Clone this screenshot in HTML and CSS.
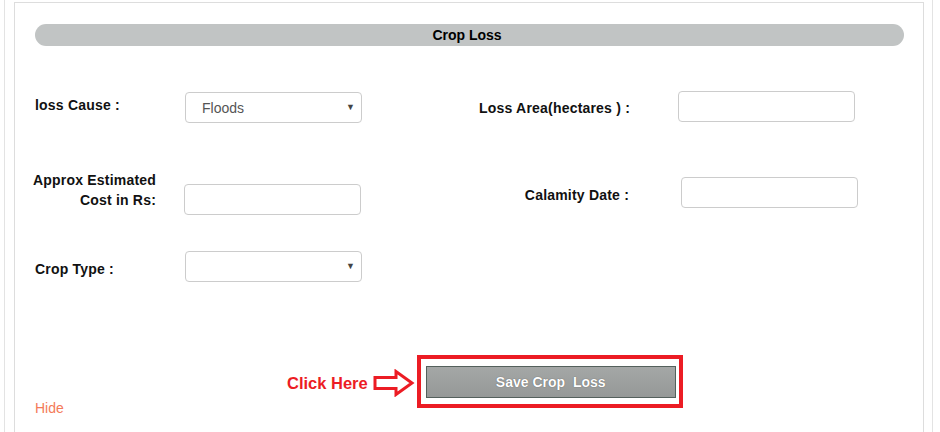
FILE: index.html
```html
<!DOCTYPE html>
<html lang="en">
<head>
    <meta charset="UTF-8">
    <meta name="viewport" content="width=device-width, initial-scale=1.0">
    <title>Crop Loss</title>
    <link rel="stylesheet" href="styles.css">
</head>
<body>
    <div class="page">
        <div class="panel">
            <div class="section-bar">Crop Loss</div>

            <div class="form-row row-one">
                <label class="field-label left-label" for="loss-cause">loss Cause :</label>
                <div class="select-wrap">
                    <select id="loss-cause" class="field">
                        <option selected>Floods</option>
                        <option>Drought</option>
                        <option>Hailstorm</option>
                    </select>
                </div>
                <label class="field-label right-label" for="loss-area">Loss Area(hectares ) :</label>
                <input type="text" id="loss-area" class="field">
            </div>

            <div class="form-row row-two">
                <label class="field-label cost-label" for="cost">Approx Estimated<br>Cost in Rs:</label>
                <input type="text" id="cost" class="field">
                <label class="field-label right-label" for="calamity-date">Calamity Date :</label>
                <input type="text" id="calamity-date" class="field shifted">
            </div>

            <div class="form-row row-three">
                <label class="field-label left-label" for="crop-type">Crop Type :</label>
                <div class="select-wrap">
                    <select id="crop-type" class="field">
                        <option selected></option>
                        <option>Paddy</option>
                        <option>Wheat</option>
                    </select>
                </div>
            </div>

            <div class="action-row">
                <a href="#" class="hide-link">Hide</a>
                <span class="click-here">Click Here</span>
                <svg class="arrow" width="42" height="28" viewBox="0 0 42 28">
                    <polygon points="2,8.5 23,8.5 23,2.5 39,14 23,25.5 23,19.5 2,19.5"
                             fill="none" stroke="#ec1c24" stroke-width="3" stroke-linejoin="miter"/>
                </svg>
                <div class="highlight-box">
                    <button class="save-button">Save Crop&nbsp; Loss</button>
                </div>
            </div>
        </div>
    </div>
</body>
</html>
```

FILE: styles.css
```css
:root {
    --panel-border: #dddddd;
    --bar-color: #c1c4c4;
    --field-border: #cccccc;
    --label-color: #111111;
    --red: #ec1c24;
    --hide-color: #f47b58;
}

* {
    margin: 0;
    padding: 0;
    box-sizing: border-box;
}

body {
    background-color: #ffffff;
    font-family: 'Liberation Sans', Arial, sans-serif;
    overflow: hidden;
}

.page {
    width: 929px;
    margin-left: 4px;
    min-height: 432px;
    border-left: 1px solid #e3e3e3;
    border-right: 1px solid #e3e3e3;
    padding: 2px 8px 0 9px;
}

.panel {
    width: 910px;
    min-height: 440px;
    border: 1px solid var(--panel-border);
    padding: 21px 19px 0 20px;
}

.section-bar {
    height: 22px;
    background-color: var(--bar-color);
    border-radius: 11px;
    text-align: center;
    font-size: 14px;
    font-weight: 700;
    line-height: 22px;
    color: #000;
    padding-right: 5px;
}

.form-row {
    display: flex;
    align-items: flex-start;
}

.row-one {
    margin-top: 45px;
    height: 32px;
}

.row-two {
    margin-top: 47px;
    height: 46px;
}

.row-three {
    margin-top: 35px;
    height: 32px;
}

.field-label {
    font-size: 14px;
    font-weight: 700;
    color: var(--label-color);
    line-height: 16px;
    letter-spacing: 0.2px;
}

.left-label {
    width: 150px;
}

.row-one .left-label {
    margin-top: 6px;
}

.row-three .left-label {
    margin-top: 10px;
}

.cost-label {
    width: 130px;
    margin-right: 28px;
    margin-left: -9px;
    text-align: right;
    line-height: 20px;
}

.right-label {
    width: 268px;
    text-align: right;
    margin-right: 48px;
}

.row-one .right-label {
    margin-top: 9px;
}

.row-two .right-label {
    margin-top: 17px;
    margin-right: 52px;
}

.field {
    width: 177px;
    height: 31px;
    border: 1px solid var(--field-border);
    border-radius: 4px;
    background-color: #fff;
    font-family: 'Liberation Sans', Arial, sans-serif;
    font-size: 14px;
    color: #555;
    padding: 0 16px;
    outline: none;
}

.row-two .field {
    margin-top: 14px;
}

.row-two .shifted {
    margin-top: 7px;
}

.select-wrap {
    position: relative;
    width: 177px;
}

.row-one .select-wrap {
    margin-top: 1px;
}

.select-wrap select {
    appearance: none;
    -webkit-appearance: none;
}

.select-wrap::after {
    content: "\25BC";
    position: absolute;
    right: 7px;
    top: 10px;
    font-size: 9px;
    color: #444;
    pointer-events: none;
}

.action-row {
    display: flex;
    align-items: flex-start;
    margin-top: 72px;
}

.hide-link {
    width: 252px;
    margin-top: 45px;
    font-size: 14px;
    line-height: 16px;
    color: var(--hide-color);
    text-decoration: none;
}

.click-here {
    margin-top: 18px;
    font-size: 16.5px;
    font-weight: 700;
    line-height: 20px;
    color: var(--red);
}

.arrow {
    margin-top: 14px;
    margin-left: 5px;
    margin-right: 2px;
}

.highlight-box {
    border: 4px solid var(--red);
    padding: 7px 3px 6px 5px;
}

.save-button {
    display: block;
    width: 250px;
    height: 32px;
    border: 1px solid #54605c;
    background: linear-gradient(#a4a7a6, #959897);
    color: #fff;
    font-family: 'Liberation Sans', Arial, sans-serif;
    font-size: 14px;
    font-weight: 700;
    text-shadow: 0 0 1px #4a4a4a;
    cursor: pointer;
}
```
